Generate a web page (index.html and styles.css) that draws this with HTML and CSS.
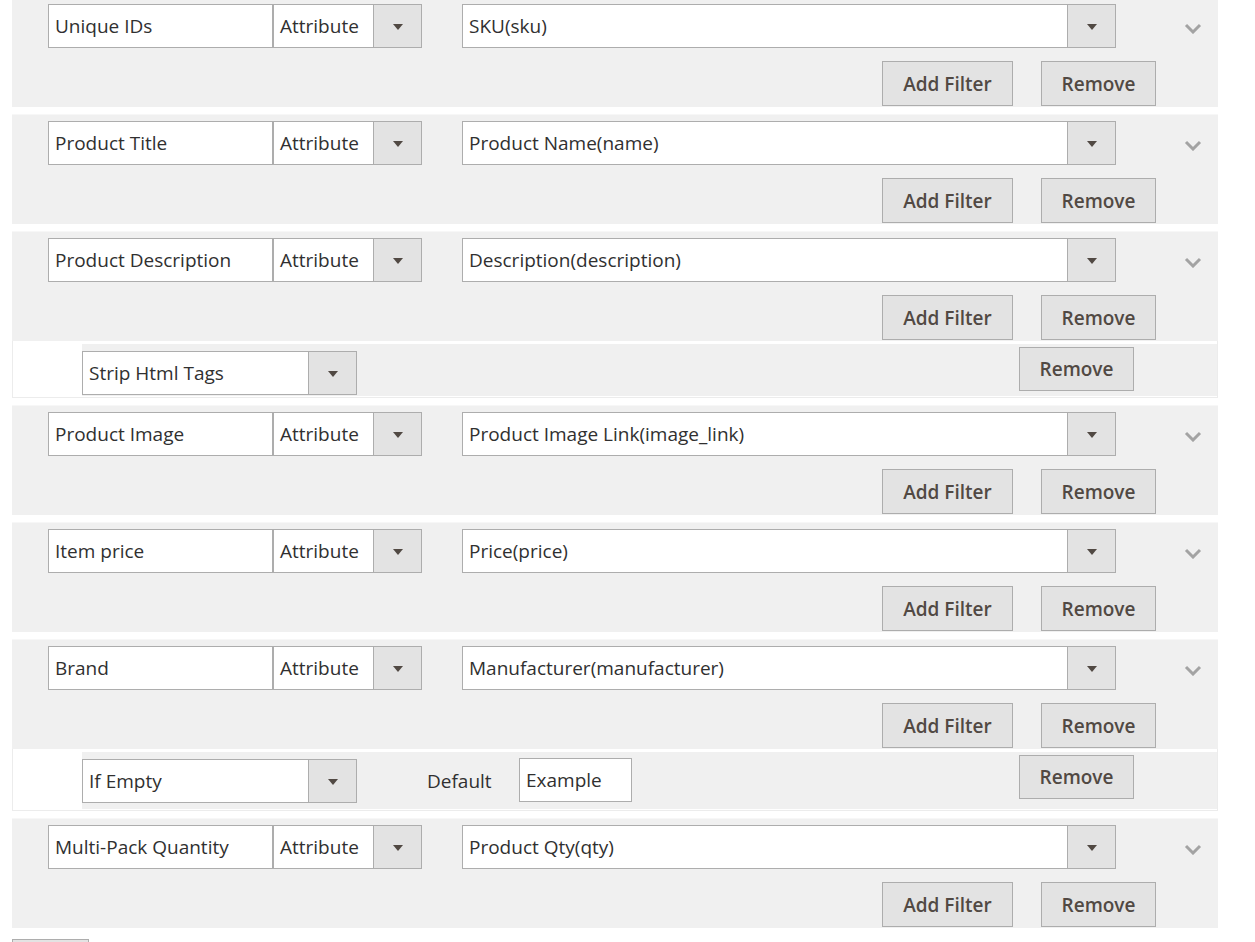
FILE: index.html
```html
<!DOCTYPE html>
<html lang="en">
<head>
  <meta charset="UTF-8" />
  <meta name="viewport" content="width=device-width, initial-scale=1.0"/>
  <title>Feed Attributes Mapping</title>
  <link rel="stylesheet" href="styles.css">
</head>
<body>
  <main class="mapping">

    <section class="mapping-block">
      <div class="row">
        <div class="row-fields">
          <input class="field field-name" type="text" value="Unique IDs" />
          <div class="select select-type"><span class="select-value">Attribute</span><span class="select-arrow"></span></div>
          <div class="select select-attr"><span class="select-value">SKU(sku)</span><span class="select-arrow"></span></div>
          <span class="chevron"><svg width="18" height="11" viewBox="0 0 18 11"><path d="M2 2 L9 9 L16 2" fill="none" stroke="#a3a3a3" stroke-width="3"/></svg></span>
        </div>
        <div class="row-actions">
          <button class="btn btn-filter">Add Filter</button>
          <button class="btn btn-remove">Remove</button>
        </div>
      </div>
    </section>

    <section class="mapping-block">
      <div class="row">
        <div class="row-fields">
          <input class="field field-name" type="text" value="Product Title" />
          <div class="select select-type"><span class="select-value">Attribute</span><span class="select-arrow"></span></div>
          <div class="select select-attr"><span class="select-value">Product Name(name)</span><span class="select-arrow"></span></div>
          <span class="chevron"><svg width="18" height="11" viewBox="0 0 18 11"><path d="M2 2 L9 9 L16 2" fill="none" stroke="#a3a3a3" stroke-width="3"/></svg></span>
        </div>
        <div class="row-actions">
          <button class="btn btn-filter">Add Filter</button>
          <button class="btn btn-remove">Remove</button>
        </div>
      </div>
    </section>

    <section class="mapping-block">
      <div class="row">
        <div class="row-fields">
          <input class="field field-name" type="text" value="Product Description" />
          <div class="select select-type"><span class="select-value">Attribute</span><span class="select-arrow"></span></div>
          <div class="select select-attr"><span class="select-value">Description(description)</span><span class="select-arrow"></span></div>
          <span class="chevron"><svg width="18" height="11" viewBox="0 0 18 11"><path d="M2 2 L9 9 L16 2" fill="none" stroke="#a3a3a3" stroke-width="3"/></svg></span>
        </div>
        <div class="row-actions">
          <button class="btn btn-filter">Add Filter</button>
          <button class="btn btn-remove">Remove</button>
        </div>
      </div>
      <div class="filters">
        <div class="filter">
          <div class="select select-filter"><span class="select-value">Strip Html Tags</span><span class="select-arrow"></span></div>
          <button class="btn btn-remove btn-small">Remove</button>
        </div>
      </div>
    </section>

    <section class="mapping-block">
      <div class="row">
        <div class="row-fields">
          <input class="field field-name" type="text" value="Product Image" />
          <div class="select select-type"><span class="select-value">Attribute</span><span class="select-arrow"></span></div>
          <div class="select select-attr"><span class="select-value">Product Image Link(image_link)</span><span class="select-arrow"></span></div>
          <span class="chevron"><svg width="18" height="11" viewBox="0 0 18 11"><path d="M2 2 L9 9 L16 2" fill="none" stroke="#a3a3a3" stroke-width="3"/></svg></span>
        </div>
        <div class="row-actions">
          <button class="btn btn-filter">Add Filter</button>
          <button class="btn btn-remove">Remove</button>
        </div>
      </div>
    </section>

    <section class="mapping-block">
      <div class="row">
        <div class="row-fields">
          <input class="field field-name" type="text" value="Item price" />
          <div class="select select-type"><span class="select-value">Attribute</span><span class="select-arrow"></span></div>
          <div class="select select-attr"><span class="select-value">Price(price)</span><span class="select-arrow"></span></div>
          <span class="chevron"><svg width="18" height="11" viewBox="0 0 18 11"><path d="M2 2 L9 9 L16 2" fill="none" stroke="#a3a3a3" stroke-width="3"/></svg></span>
        </div>
        <div class="row-actions">
          <button class="btn btn-filter">Add Filter</button>
          <button class="btn btn-remove">Remove</button>
        </div>
      </div>
    </section>

    <section class="mapping-block">
      <div class="row">
        <div class="row-fields">
          <input class="field field-name" type="text" value="Brand" />
          <div class="select select-type"><span class="select-value">Attribute</span><span class="select-arrow"></span></div>
          <div class="select select-attr"><span class="select-value">Manufacturer(manufacturer)</span><span class="select-arrow"></span></div>
          <span class="chevron"><svg width="18" height="11" viewBox="0 0 18 11"><path d="M2 2 L9 9 L16 2" fill="none" stroke="#a3a3a3" stroke-width="3"/></svg></span>
        </div>
        <div class="row-actions">
          <button class="btn btn-filter">Add Filter</button>
          <button class="btn btn-remove">Remove</button>
        </div>
      </div>
      <div class="filters">
        <div class="filter filter-default">
          <div class="select select-filter"><span class="select-value">If Empty</span><span class="select-arrow"></span></div>
          <label class="filter-label" for="defaultValue">Default</label>
          <input id="defaultValue" class="field field-default" type="text" value="Example" />
          <button class="btn btn-remove btn-small">Remove</button>
        </div>
      </div>
    </section>

    <section class="mapping-block">
      <div class="row">
        <div class="row-fields">
          <input class="field field-name" type="text" value="Multi-Pack Quantity" />
          <div class="select select-type"><span class="select-value">Attribute</span><span class="select-arrow"></span></div>
          <div class="select select-attr"><span class="select-value">Product Qty(qty)</span><span class="select-arrow"></span></div>
          <span class="chevron"><svg width="18" height="11" viewBox="0 0 18 11"><path d="M2 2 L9 9 L16 2" fill="none" stroke="#a3a3a3" stroke-width="3"/></svg></span>
        </div>
        <div class="row-actions">
          <button class="btn btn-filter">Add Filter</button>
          <button class="btn btn-remove">Remove</button>
        </div>
      </div>
    </section>

    <button class="btn btn-add-row" aria-label="Add Row"></button>
  </main>
</body>
</html>
```

FILE: styles.css
```css
/* Magento style feed mapping */
body {
  font-family: 'Open Sans', 'Liberation Sans', sans-serif;
  font-size: 19px;
  color: #303030;
  background-color: #fff;
  margin: 0;
  padding: 0;
  overflow: hidden;
}

.mapping {
  width: 1206px;
  margin: -3px 0 0 12px;
}

.mapping-block {
  margin-bottom: 7px;
}

.row {
  background-color: #f0f0f0;
  border-top: 1px solid #f7f7f7;
  border-bottom: 1px solid #f0f0f0;
  padding: 6px 0 0 36px;
}

.row-fields {
  display: flex;
  align-items: center;
  height: 44px;
}

.field {
  box-sizing: border-box;
  height: 44px;
  border: 1px solid #adadad;
  background-color: #fff;
  font-family: inherit;
  font-size: 19px;
  color: #303030;
  padding: 0 6px;
  margin: 0;
  outline: none;
}

.field-name {
  width: 225px;
}

.select {
  box-sizing: border-box;
  display: flex;
  height: 44px;
  border: 1px solid #adadad;
  background-color: #fff;
}

.select-value {
  flex: 1;
  padding-left: 6px;
  line-height: 42px;
  white-space: nowrap;
  overflow: hidden;
}

.select-arrow {
  width: 47px;
  background-color: #e3e3e3;
  border-left: 1px solid #adadad;
  display: flex;
  align-items: center;
  justify-content: center;
}

.select-arrow::after {
  content: "";
  border-left: 5px solid transparent;
  border-right: 5px solid transparent;
  border-top: 6px solid #514943;
  margin-top: 1px;
}

.select-type {
  width: 149px;
}

.select-attr {
  width: 654px;
  margin-left: 40px;
}

.chevron {
  flex: 1;
  display: flex;
  justify-content: flex-end;
  padding-right: 16px;
  margin-top: 5px;
}

.row-actions {
  display: flex;
  justify-content: flex-end;
  gap: 28px;
  padding: 13px 62px 0 0;
}

.btn {
  box-sizing: border-box;
  height: 45px;
  background-color: #e3e3e3;
  border: 1px solid #adadad;
  color: #514943;
  font-family: inherit;
  font-size: 19px;
  font-weight: 600;
  padding: 0;
  margin: 0;
  cursor: pointer;
}

.btn-filter {
  width: 131px;
}

.btn-remove {
  width: 115px;
}

.btn-small {
  height: 44px;
}

.filters {
  border: 1px solid #ececec;
  border-top: none;
  padding: 3px 0 1px 69px;
}

.filter {
  display: flex;
  align-items: flex-start;
  background-color: #f0f0f0;
  padding: 7px 83px 1px 0;
}

.filter-default {
  padding-bottom: 6px;
}

.select-filter {
  width: 275px;
}

.filter .btn-small {
  margin-left: auto;
  margin-top: -4px;
}

.filter-label {
  box-sizing: border-box;
  width: 162px;
  padding-left: 70px;
  line-height: 44px;
}

.field-default {
  width: 113px;
  height: 44px;
  margin-top: -1px;
}

.btn-add-row {
  width: 77px;
  margin-top: 4px;
}
```
